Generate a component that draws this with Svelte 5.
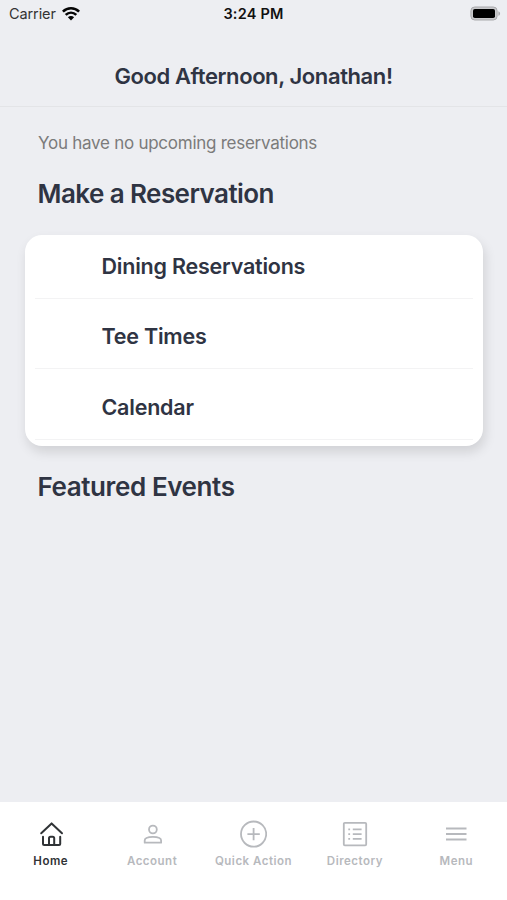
<script lang="ts">
	const reservations = ['Dining Reservations', 'Tee Times', 'Calendar'];

	const tabs = [
		{ id: 'home', label: 'Home' },
		{ id: 'account', label: 'Account' },
		{ id: 'quick', label: 'Quick Action' },
		{ id: 'directory', label: 'Directory' },
		{ id: 'menu', label: 'Menu' }
	];

	let active = $state('home');
</script>

<div class="screen">
	<div class="status-bar">
		<div class="carrier">
			<span>Carrier</span>
			<svg width="18" height="14" viewBox="0 0 18 14" fill="none" stroke="#050505" stroke-width="2.6">
				<path d="M0.9 4.6C5.5 0.2 12.5 0.2 17.1 4.6" />
				<path d="M3.7 7.9C6.8 5 11.2 5 14.3 7.9" />
				<path d="M5.9 10.3C7.7 8.5 10.3 8.5 12.1 10.3L9 13.6Z" fill="#050505" stroke="none" />
			</svg>
		</div>
		<span class="clock">3:24 PM</span>
		<svg class="battery" width="31" height="15" viewBox="0 0 31 15">
			<rect x="0.9" y="1" width="26.2" height="13" rx="3.8" fill="#c9c9cc" stroke="#a9a9ac" stroke-width="1" />
			<rect x="3" y="3" width="22" height="9" rx="1.8" fill="#000" />
			<path d="M28.4 5.2C30.6 6 30.6 9 28.4 9.8Z" fill="#a9a9ac" />
		</svg>
	</div>

	<header>
		<h1>Good Afternoon, Jonathan!</h1>
	</header>

	<main>
		<p class="notice">You have no upcoming reservations</p>
		<h2 class="make">Make a Reservation</h2>
		<div class="card">
			{#each reservations as item}
				<div class="row"><span>{item}</span></div>
			{/each}
		</div>
		<h2 class="featured">Featured Events</h2>
	</main>

	<nav>
		{#each tabs as tab}
			<button class="tab" class:active={active === tab.id} onclick={() => (active = tab.id)}>
				<svg width="28" height="28" viewBox="0 0 28 28" fill="none" stroke="currentColor" stroke-width="1.8">
					{#if tab.id === 'home'}
						<g stroke-width="2" stroke-linecap="round" stroke-linejoin="round">
							<path d="M4.2 13.2L14.6 3.4L25 13.2" />
							<path d="M6 16.8V24Q6 25.1 7.1 25.1H22.1Q23.2 25.1 23.2 24V16.8" />
							<path d="M12 25V18.3Q12 16.8 13.5 16.8H15.7Q17.2 16.8 17.2 18.3V25" />
						</g>
					{:else if tab.id === 'account'}
						<circle cx="14.9" cy="9.5" r="3.9" />
						<path d="M6.7 22.7V20.5C6.7 17.9 10.5 16.9 14.9 16.9S23.1 17.9 23.1 20.5V22.7Z" stroke-linejoin="round" />
					{:else if tab.id === 'quick'}
						<circle cx="14.6" cy="14.1" r="12.6" />
						<path d="M14.6 7.9V20.3M8.4 14.1H20.8" />
					{:else if tab.id === 'directory'}
						<rect x="2.8" y="2.9" width="22.4" height="22.4" rx="1" />
						<path d="M11.8 9.3H20.6M11.8 14.1H20.6M11.8 18.9H20.6" />
						<path d="M7.3 9.3H9.1M7.3 14.1H9.1M7.3 18.9H9.1" />
					{:else}
						<path d="M4 8.5H24.5M4 14H24.5M4 19.6H24.5" stroke-width="2" />
					{/if}
				</svg>
				<span>{tab.label}</span>
			</button>
		{/each}
	</nav>
</div>

<style>
	:global(body) {
		background: #edeef2;
	}

	.screen {
		display: flex;
		flex-direction: column;
		height: 900px;
		background: #edeef2;
		color: #2f3443;
		font-family: Inter, 'Liberation Sans', sans-serif;
		white-space: nowrap;
	}

	.status-bar {
		display: grid;
		grid-template-columns: 1fr auto 1fr;
		align-items: center;
		height: 27px;
		padding: 0 6px;
		box-sizing: border-box;
		font-size: 14.5px;
		color: #111;
	}

	.carrier {
		display: flex;
		align-items: center;
		gap: 6px;
		padding-left: 3px;
		letter-spacing: -0.1px;
	}

	.carrier span {
		color: #333;
	}

	.clock {
		font-weight: 600;
		font-size: 14.5px;
		letter-spacing: 0.2px;
	}

	.battery {
		justify-self: end;
	}

	header {
		height: 80px;
		box-sizing: border-box;
		padding-top: 34.5px;
		border-bottom: 1px solid #e3e4e7;
		text-align: center;
	}

	h1,
	h2,
	p {
		margin: 0;
	}

	h1 {
		font-size: 22px;
		font-weight: 600;
		line-height: 28px;
		letter-spacing: -0.4px;
	}

	main {
		flex: 1;
	}

	.notice {
		padding: 24px 38px 0;
		font-size: 17px;
		line-height: 24px;
		letter-spacing: -0.26px;
		color: #7b7b7b;
	}

	h2 {
		padding-left: 37.5px;
		font-size: 26px;
		font-weight: 600;
		line-height: 32px;
	}

	.make {
		margin-top: 23px;
		letter-spacing: -0.57px;
	}

	.card {
		height: 210.5px;
		margin: 25px 24px 0 25px;
		padding: 0 10px;
		box-sizing: border-box;
		border-radius: 17px;
		background: #fff;
		box-shadow: 2px 6px 12px rgba(0, 0, 0, 0.12);
	}

	.row {
		display: flex;
		align-items: flex-end;
		height: 70.5px;
		padding: 0 0 18px 66.5px;
		box-sizing: border-box;
		border-bottom: 1px solid #f3f3f4;
		font-size: 21.5px;
		font-weight: 600;
		line-height: 28px;
		letter-spacing: -0.22px;
	}

	.row:first-child {
		height: 63.5px;
	}

	.featured {
		margin-top: 25px;
		letter-spacing: -0.4px;
	}

	nav {
		display: grid;
		grid-template-columns: repeat(5, 1fr);
		height: 98.5px;
		background: #fff;
	}

	.tab {
		display: flex;
		flex-direction: column;
		align-items: center;
		padding: 18px 0 0;
		border: 0;
		background: none;
		font-family: inherit;
		font-size: 11.5px;
		font-weight: 600;
		line-height: 16px;
		letter-spacing: 0.5px;
		color: #b7b9bd;
	}

	.tab span {
		margin-top: 5px;
	}

	.tab.active {
		color: #303336;
	}
</style>
